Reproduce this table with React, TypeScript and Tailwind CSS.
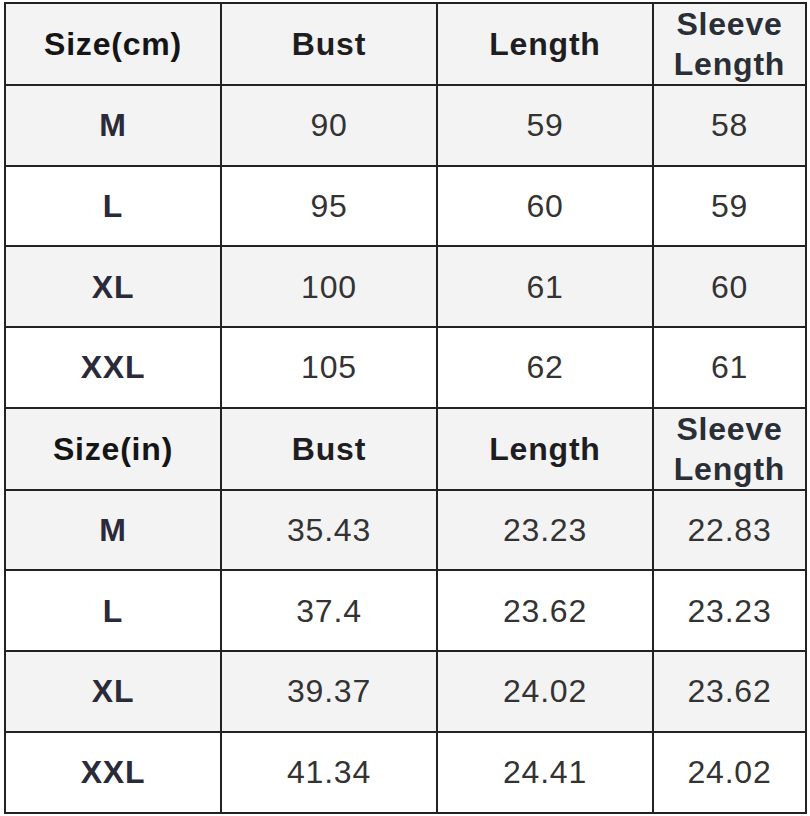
import React from "react";

type Section = {
  unit: string;
  rows: [string, string, string, string][];
};

const sections: Section[] = [
  {
    unit: "Size(cm)",
    rows: [
      ["M", "90", "59", "58"],
      ["L", "95", "60", "59"],
      ["XL", "100", "61", "60"],
      ["XXL", "105", "62", "61"],
    ],
  },
  {
    unit: "Size(in)",
    rows: [
      ["M", "35.43", "23.23", "22.83"],
      ["L", "37.4", "23.62", "23.23"],
      ["XL", "39.37", "24.02", "23.62"],
      ["XXL", "41.34", "24.41", "24.02"],
    ],
  },
];

const cell = "border-2 border-[#222] text-center align-middle p-0";

export default function App() {
  return (
    <div
      className="bg-white w-[810px] h-[816px] pt-[2px] pl-[4px]"
      style={{ fontFamily: '"Liberation Sans", Arial, sans-serif' }}
    >
      <table className="border-collapse table-fixed w-[801px] text-[32px] tracking-[0.8px]">
        <colgroup>
          <col className="w-[216px]" />
          <col className="w-[216px]" />
          <col className="w-[216px]" />
          <col className="w-[153px]" />
        </colgroup>
        <tbody>
          {sections.map((s) => (
            <React.Fragment key={s.unit}>
              <tr className="h-[80.7px] bg-[#f3f3f3]">
                <td className={`${cell} font-bold text-[#151515]`}>{s.unit}</td>
                <td className={`${cell} font-bold text-[#1e1e22]`}>Bust</td>
                <td className={`${cell} font-bold text-[#1e1e22]`}>Length</td>
                <td className={`${cell} font-bold text-[#2a2e36] leading-[40px]`}>
                  Sleeve
                  <br />
                  Length
                </td>
              </tr>
              {s.rows.map((r, i) => (
                <tr
                  key={r[0]}
                  className={`h-[80.7px] ${i % 2 === 0 ? "bg-[#f3f3f3]" : "bg-white"}`}
                >
                  <td className={`${cell} font-bold text-[#2a2a38]`}>{r[0]}</td>
                  <td className={`${cell} text-[#333]`}>{r[1]}</td>
                  <td className={`${cell} text-[#333]`}>{r[2]}</td>
                  <td className={`${cell} text-[#333]`}>{r[3]}</td>
                </tr>
              ))}
            </React.Fragment>
          ))}
        </tbody>
      </table>
    </div>
  );
}
